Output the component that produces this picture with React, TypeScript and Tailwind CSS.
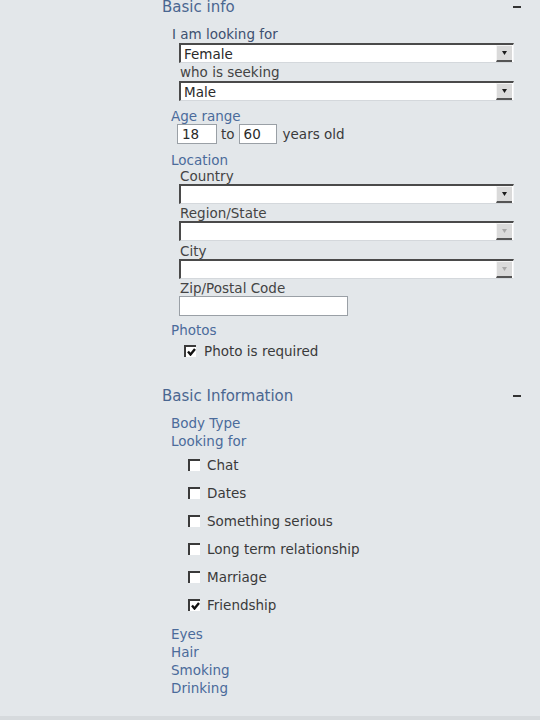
import React from 'react';

const font = { fontFamily: '"DejaVu Sans", Verdana, sans-serif' };

// Old-style sunken select box with the little grey arrow button
function Select({ value = '', disabled = false }: { value?: string; disabled?: boolean }) {
  return (
    <div className="ml-[179px] w-[335px] h-[20px] bg-white border-t-2 border-l-2 border-[#4a4a4a] border-r border-b border-r-[#f4f6f8] border-b-[#d4d8dc] flex items-center justify-between">
      <span className="pl-[3px] text-[13.5px] leading-4 text-[#2a2a2a]">{value}</span>
      <div className="w-[16px] h-[17px] mr-[1px] bg-[#dadada] border-b-2 border-[#555] border-t border-t-[#f4f4f4] border-l border-l-[#f4f4f4] flex items-center justify-center">
        <svg width="5" height="4" viewBox="0 0 5 4">
          <path d="M0 0 L5 0 L2.5 4 Z" fill={disabled ? '#a8a8a8' : '#1a1a1a'} />
        </svg>
      </div>
    </div>
  );
}

function TextBox({ value, w }: { value?: string; w: string }) {
  return (
    <div className={`${w} h-[20px] bg-white border border-[#9aa0a6] flex items-center pl-[4px] text-[13.5px] text-[#2a2a2a]`}>
      {value}
    </div>
  );
}

function Check({ checked }: { checked?: boolean }) {
  return (
    <div className="w-[12px] h-[12px] bg-white border-t-2 border-l-2 border-[#3a3a3a] shrink-0 flex items-center justify-center">
      {checked && (
        <svg width="9" height="8" viewBox="0 0 9 8">
          <path d="M1 3.5 L3.5 6.5 L8 1" stroke="#111" strokeWidth="2.4" fill="none" />
        </svg>
      )}
    </div>
  );
}

function Heading({ children, className = '' }: { children: React.ReactNode; className?: string }) {
  return (
    <div className={`w-[360px] h-[18px] flex items-center justify-between text-[15px] leading-[18px] text-[#4a6690] ${className}`}>
      <span>{children}</span>
      <span className="w-[8px] h-[2px] bg-[#333] mr-[1px]" />
    </div>
  );
}

const lookingFor = [
  { label: 'Chat' },
  { label: 'Dates' },
  { label: 'Something serious' },
  { label: 'Long term relationship' },
  { label: 'Marriage' },
  { label: 'Friendship', checked: true },
];

export default function App() {
  return (
    <div className="w-[540px] h-[720px] overflow-hidden bg-[#e3e7ea] relative" style={font}>
      <div className="pl-[162px] flex flex-col">
        {/* Basic info */}
        <Heading className="mt-[-2px]">Basic info</Heading>

        <div className="mt-[10px] ml-[10px] h-4 leading-4 text-[13.5px] text-[#3d5070]">I am looking for</div>
        <div className="mt-[1px] -ml-[162px]"><Select value="Female" /></div>
        <div className="mt-[1px] ml-[18px] h-4 leading-4 text-[13.5px] text-[#444]">who is seeking</div>
        <div className="mt-[1px] -ml-[162px]"><Select value="Male" /></div>

        <div className="mt-[7px] ml-[9px] h-4 leading-4 text-[13.5px] text-[#4b6b9b]">Age range</div>
        <div className="ml-[15px] h-[20px] flex items-center text-[13.5px] text-[#3a3a3a]">
          <TextBox value="18" w="w-[40px]" />
          <span className="ml-[4px] mr-[4px]">to</span>
          <TextBox value="60" w="w-[38px]" />
          <span className="ml-[6px]">years old</span>
        </div>

        <div className="mt-[8px] ml-[9px] h-4 leading-4 text-[13.5px] text-[#4b6b9b]">Location</div>
        <div className="ml-[18px] h-4 leading-4 text-[13.5px] text-[#444]">Country</div>
        <div className="-ml-[162px]"><Select /></div>
        <div className="mt-[1px] ml-[18px] h-4 leading-4 text-[13.5px] text-[#444]">Region/State</div>
        <div className="-ml-[162px]"><Select disabled /></div>
        <div className="mt-[2px] ml-[18px] h-4 leading-4 text-[13.5px] text-[#444]">City</div>
        <div className="-ml-[162px]"><Select disabled /></div>
        <div className="mt-[1px] ml-[18px] h-4 leading-4 text-[13.5px] text-[#444]">Zip/Postal Code</div>
        <div className="ml-[17px]"><TextBox w="w-[169px]" /></div>

        <div className="mt-[6px] ml-[9px] h-4 leading-4 text-[13.5px] text-[#4b6b9b]">Photos</div>
        <div className="mt-[5px] ml-[22px] h-4 flex items-center gap-[8px] text-[13.5px] text-[#3a3a3a]">
          <Check checked />
          <span className="leading-4">Photo is required</span>
        </div>

        {/* Basic Information */}
        <Heading className="mt-[28px]">Basic Information</Heading>
        <div className="mt-[10px] ml-[9px] h-4 leading-4 text-[13.5px] text-[#4b6b9b]">Body Type</div>
        <div className="mt-[2px] ml-[9px] h-4 leading-4 text-[13.5px] text-[#4b6b9b]">Looking for</div>
        <div className="mt-[2px] flex flex-col">
          {lookingFor.map((o) => (
            <div key={o.label} className="h-[28px] ml-[26px] flex items-center gap-[7px] text-[13.5px] text-[#3a3a3a]">
              <Check checked={o.checked} />
              <span className="leading-4">{o.label}</span>
            </div>
          ))}
        </div>
        <div className="mt-[6px] ml-[9px] flex flex-col text-[13.5px] text-[#4b6b9b]">
          {['Eyes', 'Hair', 'Smoking', 'Drinking'].map((t) => (
            <div key={t} className="h-[18px] leading-[18px]">{t}</div>
          ))}
        </div>
        <div className="mt-[23px] ml-[148px] w-[74px] h-[2px] bg-[#c4c8cc] flex justify-end">
          <span className="w-[3px] h-[3px] bg-[#555] rounded-full" />
        </div>
      </div>
      <div className="absolute left-0 bottom-0 w-full h-[4px] bg-[#d6dadd]" />
    </div>
  );
}
